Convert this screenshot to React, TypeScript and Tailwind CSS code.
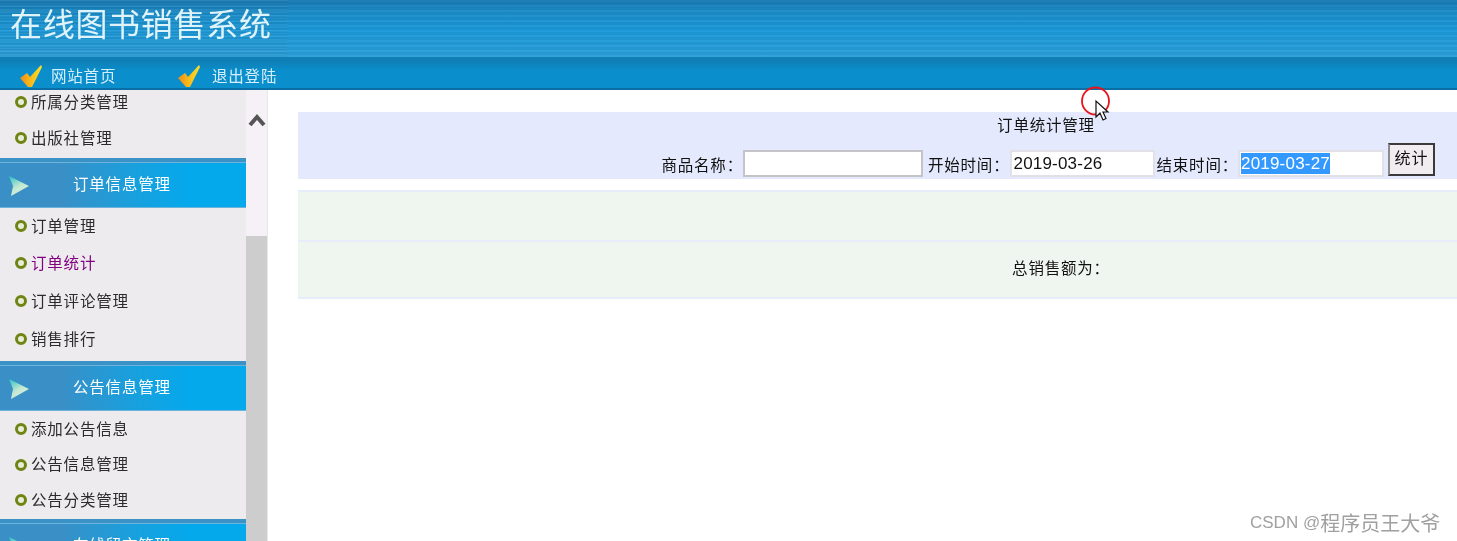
const cjk = "font-['Noto_Sans_CJK_SC','Liberation_Sans',sans-serif]";

interface MenuRow {
  label: string;
  height: string;
  visited?: boolean;
}

function Check({ id }: { id: string }) {
  return (
    <svg width="24" height="24" viewBox="0 0 24 24" className="shrink-0">
      <defs>
        <linearGradient id={id} x1="0" y1="0" x2="1" y2="0">
          <stop offset="0" stopColor="#ee8a1c" />
          <stop offset="0.45" stopColor="#f8b818" />
          <stop offset="1" stopColor="#fbe02a" />
        </linearGradient>
      </defs>
      <path d="M1 14 L8 9 L11 13 L22 1 L23 3 L13 23 L9 23 Z" fill={`url(#${id})`} />
    </svg>
  );
}

function Bullet() {
  return <span className="size-[12px] shrink-0 rounded-full border-[3px] border-[#6f8412] bg-[#e6eed8]" />;
}

function Row({ label, height, visited }: MenuRow) {
  return (
    <div className={`flex items-center gap-[4px] pl-[15px] ${height}`}>
      <Bullet />
      <span className={`pb-[1px] text-[15.5px] leading-none tracking-[0.8px] ${visited ? "text-[#800080]" : "text-[#2b2b2b]"}`}>{label}</span>
    </div>
  );
}

function GroupHeader({ title }: { title: string }) {
  return (
    <div className="h-[50px] shrink-0 bg-[#3a92c6] pt-[4px]">
      <div className="flex h-[46px] items-center border-y border-[#6db3dc] bg-[linear-gradient(90deg,#3a8fc6_0,#3a8fc6_60px,#1a9fdc_130px,#04a9ec_190px)]">
        <svg width="20" height="20" viewBox="0 0 20 20" className="ml-[9px] mt-[2px] shrink-0">
          <defs>
            <linearGradient id="arrow" x1="0" y1="0" x2="0.6" y2="1">
              <stop offset="0" stopColor="#28c2c4" />
              <stop offset="0.6" stopColor="#c4e8d2" />
              <stop offset="1" stopColor="#d8eedc" />
            </linearGradient>
          </defs>
          <path d="M0 0 L20 10 L2 20 L4 10 Z" fill="url(#arrow)" />
        </svg>
        <span className="ml-[44px] pb-[3px] text-[15.5px] leading-none tracking-[0.8px] text-white">{title}</span>
      </div>
    </div>
  );
}

function Sidebar() {
  return (
    <div className="flex w-[268px] shrink-0 overflow-hidden">
      <div className="w-[246px] shrink-0 bg-[#eeebef]">
        <Row label="所属分类管理" height="h-[24px] mb-[6px]" />
        <Row label="出版社管理" height="h-[36px] mb-[2px]" />
        <GroupHeader title="订单信息管理" />
        <Row label="订单管理" height="h-[36px]" />
        <Row label="订单统计" height="h-[38px]" visited />
        <Row label="订单评论管理" height="h-[38px]" />
        <Row label="销售排行" height="h-[38px] mb-[3px]" />
        <GroupHeader title="公告信息管理" />
        <Row label="添加公告信息" height="h-[36px]" />
        <Row label="公告信息管理" height="h-[35px]" />
        <Row label="公告分类管理" height="h-[36px] mb-[1px]" />
        <GroupHeader title="在线留言管理" />
      </div>
      <div className="flex w-[22px] shrink-0 flex-col border-r border-[#e8e8e8] bg-[#f5f1f6]">
        <div className="flex h-[146px] shrink-0 justify-center pt-[22px]">
          <svg width="18" height="15" viewBox="0 0 18 15">
            <path d="M2 13 L9 5 L16 13" fill="none" stroke="#555" strokeWidth="4" />
          </svg>
        </div>
        <div className="flex-1 bg-[#cdcdcd]" />
      </div>
    </div>
  );
}

function Field({ value, width, selected, strong }: { value?: string; width: string; selected?: boolean; strong?: boolean }) {
  return (
    <div className={`flex h-[27px] items-center bg-white pb-[1px] pl-[1px] text-[17px] leading-[21px] tracking-[0.2px] text-[#111] font-['Liberation_Sans',sans-serif] ${width} ${strong ? "border-2 border-[#c4c4c8]" : "border-2 border-[#e3e1e8]"}`}>
      {selected ? <span className="bg-[#3399ff] text-white">{value}</span> : value}
    </div>
  );
}

export default function App() {
  return (
    <div className={`flex h-[541px] w-[1457px] flex-col overflow-hidden bg-white blur-[0.4px] ${cjk}`}>
      {/* Header */}
      <div className="h-[57px] shrink-0 bg-[repeating-linear-gradient(180deg,#ffffff0a_0,#ffffff0a_2px,#00000008_2px,#00000008_5px),linear-gradient(180deg,#1878b2_0,#1a8cc8_12px,#1a98d8_30px,#2a9ed8_57px)]">
        <div className="flex h-full w-[287px] items-center bg-[repeating-linear-gradient(180deg,#ffffff0c_0,#ffffff0c_1px,#0000000a_1px,#0000000a_3px)]">
          <span className="mb-[13px] ml-[10px] text-[32px] leading-none tracking-[0.7px] text-[#dff3fb]">在线图书销售系统</span>
        </div>
      </div>
      <div className="flex h-[33px] shrink-0 items-center border-b-2 border-[#0b6fa6] bg-[linear-gradient(180deg,#0f7fb6_0,#0f7fb6_4px,#0a8fcc_14px,#0a8fcc_100%)] pl-[19px] pt-[7px] text-[15.5px] leading-none tracking-[0.8px] text-[#d6eefa]">
        <Check id="check-home" />
        <span className="ml-[8px] w-[126px]">网站首页</span>
        <Check id="check-exit" />
        <span className="ml-[11px]">退出登陆</span>
      </div>

      <div className="flex min-h-0 flex-1">
        <Sidebar />
        <div className="flex-1 pl-[30px] pt-[22px] text-[15.5px] leading-none tracking-[0.8px] text-[#111]">
          {/* Search panel */}
          <div className="flex h-[67px] flex-col bg-[#e4e9fd]">
            <div className="pl-[337px] pt-[5px] text-center">订单统计管理</div>
            <div className="flex flex-1 items-end justify-end pb-[2px] pr-[22px]">
              <span className="pb-[5px]">商品名称：</span>
              <Field width="w-[180px]" strong />
              <span className="ml-[5px] pb-[5px]">开始时间：</span>
              <Field value="2019-03-26" width="w-[145px] ml-[1px]" />
              <span className="ml-[1px] pb-[5px]">结束时间：</span>
              <Field value="2019-03-27" width="w-[146px]" selected />
              <button type="button" className="mb-[1px] ml-[4px] h-[33px] w-[47px] border-2 border-[#3a3a3a] border-l-[#8a8a8a] bg-[#f0ecf0] pb-[5px] text-[16px] tracking-[1px] text-[#111]">
                统计
              </button>
            </div>
          </div>

          {/* Result table */}
          <div className="mt-[11px] border-y-2 border-[#e8edfb] bg-[#eff5ef]">
            <div className="h-[50px] border-b-2 border-[#e8edfb]" />
            <div className="flex h-[55px] items-center justify-center pb-[4px] pl-[367px]">总销售额为：</div>
          </div>
        </div>
      </div>

      {/* Recording cursor */}
      <svg width="32" height="38" viewBox="0 0 32 38" className="absolute left-[1080px] top-[84px]">
        <circle cx="15.5" cy="17" r="13.5" fill="none" stroke="#e8141c" strokeWidth="1.8" />
        <path d="M16 17 L16 33 L20 29 L23 36 L26 34.5 L23 28 L28 28 Z" fill="#fff" stroke="#111" strokeWidth="1.2" />
      </svg>

      <div className="absolute left-[1250px] top-[512px] flex items-center text-[17px] leading-[22px] text-[#a0a0a0] font-['Liberation_Sans',sans-serif]">
        CSDN @<span className="text-[20px] font-['Noto_Sans_CJK_SC',sans-serif]">程序员王大爷</span>
      </div>
    </div>
  );
}
